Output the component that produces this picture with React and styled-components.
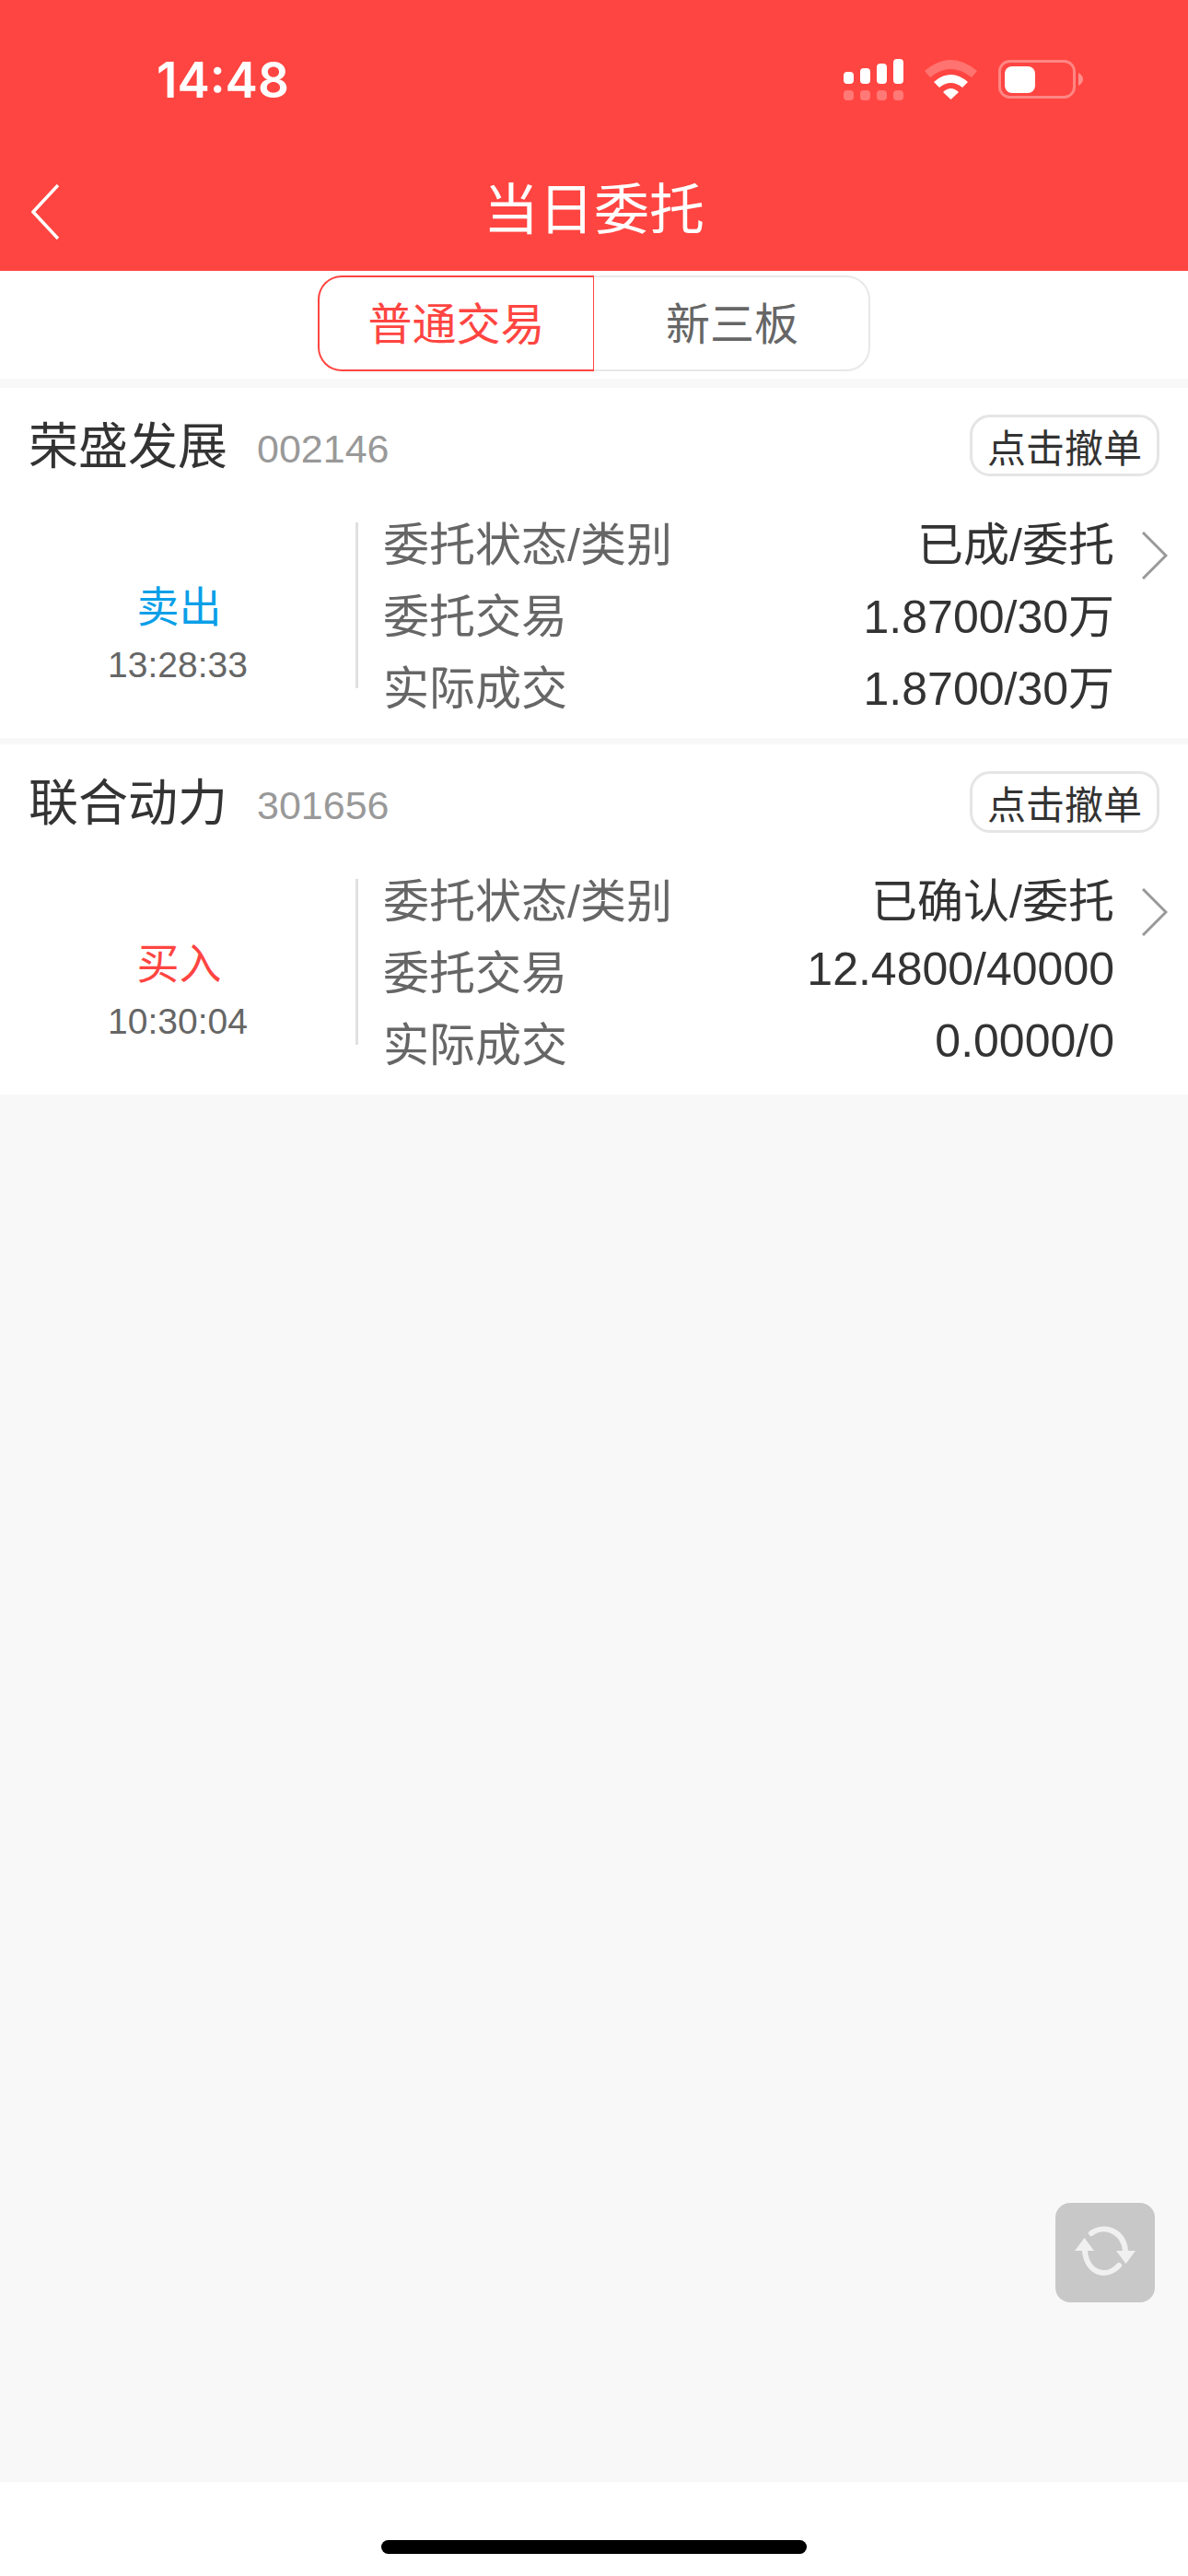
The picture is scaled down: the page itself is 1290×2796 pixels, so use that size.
import React from 'react'
import styled, { createGlobalStyle } from 'styled-components'

const GlobalStyle = createGlobalStyle`
  html, body { margin: 0; padding: 0; background: #fff; }
  body { font-family: "Liberation Sans", "Noto Sans CJK SC", sans-serif; }
  * { box-sizing: border-box; }
`

const Page = styled.div`
  position: relative;
  width: 1290px;
  height: 2796px;
  display: flex;
  flex-direction: column;
  background: #fff;
`

const Header = styled.header`
  background: #ff4541;
  height: 294px;
  color: #fff;
  display: flex;
  flex-direction: column;
`

const StatusBar = styled.div`
  height: 165px;
  display: flex;
  align-items: flex-start;
  justify-content: space-between;
  padding: 56px 114px 0 170px;
`

const Clock = styled.div`
  font-family: Inter, "Liberation Sans", sans-serif;
  font-size: 53px;
  line-height: 63px;
  font-weight: 600;
`

const StatusIcons = styled.svg`
  display: block;
  margin-top: 8px;
`

const NavBar = styled.div`
  position: relative;
  flex: 1;
  display: flex;
  align-items: center;
  justify-content: center;
  padding-bottom: 2px;
`

const Title = styled.div`
  font-size: 60px;
  line-height: 70px;
`

const BackIcon = styled.svg`
  position: absolute;
  left: 34px;
  top: 35px;
`

const TabBar = styled.div`
  height: 117px;
  padding-top: 5px;
  display: flex;
  justify-content: center;
`

const Tab = styled.div`
  width: 300px;
  height: 104px;
  padding-bottom: 6px;
  padding-left: ${p => (p.$active ? '0' : '2px')};
  display: flex;
  align-items: center;
  justify-content: center;
  font-size: 48px;
  color: ${p => (p.$active ? '#ff4541' : '#666')};
  border: 2px solid ${p => (p.$active ? '#ff4541' : '#e8e8e8')};
  border-left-width: ${p => (p.$active ? '2px' : '0')};
  border-right-width: ${p => (p.$active ? '1px' : '2px')};
  border-radius: ${p => (p.$active ? '26px 0 0 26px' : '0 26px 26px 0')};
`

const Content = styled.main`
  flex: 1;
  background: #f8f8f8;
  padding-top: 10px;
  display: flex;
  flex-direction: column;
  gap: 7px;
`

const Card = styled.section`
  background: #fff;
  height: 380px;
  padding-top: 29px;
`

const CardHead = styled.div`
  height: 67px;
  display: flex;
  align-items: center;
  padding: 0 31px 0 31px;
`

const StockName = styled.div`
  font-size: 54px;
  line-height: 64px;
  color: #333;
  margin-top: 2px;
`

const StockCode = styled.div`
  font-size: 43px;
  color: #999;
  margin-left: 32px;
  margin-top: 8px;
`

const CancelButton = styled.button`
  margin-left: auto;
  width: 206px;
  height: 67px;
  padding: 0;
  background: #fff;
  border: 3px solid #e5e5e5;
  border-radius: 22px;
  font-family: inherit;
  font-size: 42px;
  color: #333;
`

const CardBody = styled.div`
  display: flex;
  margin-top: 34px;
`

const Side = styled.div`
  width: 386px;
  padding-top: 85px;
  display: flex;
  flex-direction: column;
  align-items: center;
`

const Direction = styled.div`
  font-size: 46px;
  line-height: 46px;
  margin-left: 3px;
  color: ${p => (p.$buy ? '#ff4541' : '#0a9fe8')};
`

const Time = styled.div`
  font-size: 39px;
  line-height: 44px;
  color: #666;
  margin-top: 18px;
`

const Divider = styled.div`
  width: 3px;
  height: 180px;
  margin-top: 16px;
  background: #e0e0e0;
`

const Details = styled.div`
  flex: 1;
  margin-top: -3px;
  padding-left: 27px;
`

const DetailRow = styled.div`
  height: 78px;
  display: flex;
  align-items: center;
  justify-content: space-between;
  font-size: 50px;
`

const Label = styled.span`
  color: #666;
`

const Value = styled.span`
  color: #333;
`

const ChevronSlot = styled.div`
  width: 80px;
  padding: 26px 0 0 30px;
`

const RefreshButton = styled.div`
  position: absolute;
  left: 1146px;
  top: 2391px;
  width: 108px;
  height: 108px;
  border-radius: 16px;
  background: #c8c8c8;
  display: flex;
  align-items: center;
  justify-content: center;
`

const HomeArea = styled.div`
  height: 102px;
  background: #fff;
  padding-top: 63px;
  display: flex;
  justify-content: center;
`

const HomeBar = styled.div`
  width: 462px;
  height: 15px;
  border-radius: 8px;
  background: #000;
`

const orders = [
  {
    name: '荣盛发展',
    code: '002146',
    direction: '卖出',
    time: '13:28:33',
    status: '已成/委托',
    order: '1.8700/30万',
    deal: '1.8700/30万',
  },
  {
    name: '联合动力',
    code: '301656',
    direction: '买入',
    buy: true,
    time: '10:30:04',
    status: '已确认/委托',
    order: '12.4800/40000',
    deal: '0.0000/0',
  },
]

const SystemIcons = () => (
  <StatusIcons width="260" height="46" viewBox="916 64 260 46" fill="#fff">
    <rect x="916" y="78" width="11" height="13" rx="4" />
    <rect x="934" y="74" width="11" height="17" rx="4" />
    <rect x="952" y="69" width="11" height="22" rx="4" />
    <rect x="970" y="64" width="11" height="27" rx="4" />
    <g opacity=".28">
      <rect x="916" y="98" width="11" height="11" rx="4" />
      <rect x="934" y="98" width="11" height="11" rx="4" />
      <rect x="952" y="98" width="11" height="11" rx="4" />
      <rect x="970" y="98" width="11" height="11" rx="4" />
    </g>
    <path d="M1004 77 Q1032.500 53 1061 77 L1055 84 Q1032.500 66 1010 84 Z" opacity=".25" />
    <path d="M1014 89 Q1032.500 73 1051 89 L1045 95 Q1032.500 85 1020 95 Z" />
    <path d="M1024 100 Q1032.500 92 1041 100 L1032.500 108 Z" />
    <rect x="1085.500" y="66.500" width="81" height="39" rx="11" fill="none" stroke="#fff" strokeWidth="3" opacity=".35" />
    <rect x="1091" y="72" width="33" height="29" rx="8" />
    <path d="M1171 79 Q1176 82 1176 86 Q1176 90 1171 93 Z" opacity=".4" />
  </StatusIcons>
)

const OrderCard = ({ item }) => (
  <Card>
    <CardHead>
      <StockName>{item.name}</StockName>
      <StockCode>{item.code}</StockCode>
      <CancelButton>点击撤单</CancelButton>
    </CardHead>
    <CardBody>
      <Side>
        <Direction $buy={item.buy}>{item.direction}</Direction>
        <Time>{item.time}</Time>
      </Side>
      <Divider />
      <Details>
        <DetailRow>
          <Label>委托状态/类别</Label>
          <Value>{item.status}</Value>
        </DetailRow>
        <DetailRow>
          <Label>委托交易</Label>
          <Value>{item.order}</Value>
        </DetailRow>
        <DetailRow>
          <Label>实际成交</Label>
          <Value>{item.deal}</Value>
        </DetailRow>
      </Details>
      <ChevronSlot>
        <svg width="28" height="52" viewBox="0 0 28 52" fill="none" stroke="#999" strokeWidth="3">
          <path d="M1 1 L26 26 L1 51" />
        </svg>
      </ChevronSlot>
    </CardBody>
  </Card>
)

const App = () => (
  <>
    <GlobalStyle />
    <Page>
      <Header>
        <StatusBar>
          <Clock>14:48</Clock>
          <SystemIcons />
        </StatusBar>
        <NavBar>
          <BackIcon width="30" height="60" viewBox="0 0 30 60" fill="none" stroke="#fff" strokeWidth="3.500">
            <path d="M29 1 L2 30 L29 59" />
          </BackIcon>
          <Title>当日委托</Title>
        </NavBar>
      </Header>
      <TabBar>
        <Tab $active>普通交易</Tab>
        <Tab>新三板</Tab>
      </TabBar>
      <Content>
        {orders.map(item => (
          <OrderCard key={item.code} item={item} />
        ))}
      </Content>
      <HomeArea>
        <HomeBar />
      </HomeArea>
      <RefreshButton>
        <svg width="68" height="60" viewBox="0 0 68 60" fill="none" stroke="#f0f0f0" strokeWidth="6" strokeLinecap="round">
          <path d="M19 9 C33 -1 54 6 56 28" />
          <path d="M49 44 C35 59 14 52 12 28" />
          <path d="M46 28 H67 L56.500 42 Z" fill="#f0f0f0" stroke="none" />
          <path d="M1 28 H22 L11.500 14 Z" fill="#f0f0f0" stroke="none" />
        </svg>
      </RefreshButton>
    </Page>
  </>
)

export default App
